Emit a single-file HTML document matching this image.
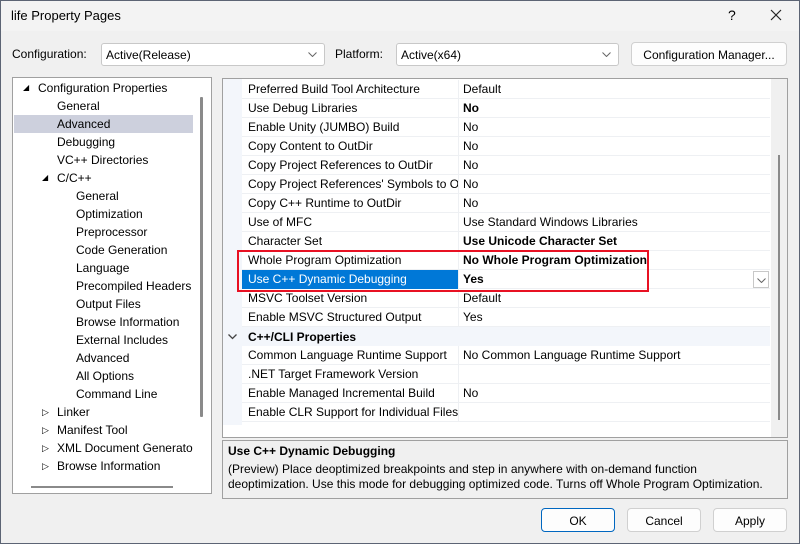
<!DOCTYPE html>
<html><head><meta charset="utf-8"><style>
*{box-sizing:border-box;margin:0;padding:0}
body{width:800px;height:544px;overflow:hidden;background:#f0f0f0;font-family:"Liberation Sans",sans-serif;font-size:12px;color:#000;position:relative}
.abs{position:absolute}
.win{position:absolute;left:0;top:0;width:800px;height:544px;border:1px solid #5c6474;}
.combo{position:absolute;height:23px;background:#fff;border:1px solid #c8c8c8;border-radius:3px;padding:4px 0 0 4px}
.btn{position:absolute;height:24px;background:#fdfdfd;border:1px solid #d0d0d0;border-radius:4px;text-align:center;padding-top:5px}
.tree div{position:absolute;height:18px;line-height:18px;white-space:nowrap}
.row{position:absolute;left:242px;width:528px;height:19px;border-bottom:1px solid #eef0f3;line-height:19px;white-space:nowrap}
.row .n{position:absolute;left:6px;width:210px;overflow:hidden}
.row .v{position:absolute;left:216px;padding-left:4px;border-left:1px solid #eef0f3;height:19px;width:312px}
b{font-weight:bold}
</style></head><body>
<div class="win"></div>
<div class="abs" style="left:1px;top:1px;width:798px;height:30px;background:#f3f3f3"></div>
<div class="abs" style="left:11px;top:8px;font-size:13px">life Property Pages</div>
<div class="abs" style="left:728px;top:7px;font-size:14px">?</div>
<svg class="abs" style="left:770px;top:9px" width="12" height="12"><path d="M1 1L11 11M11 1L1 11" stroke="#222" stroke-width="1.2"/></svg>

<div class="abs" style="left:12px;top:47px">Configuration:</div>
<div class="combo" style="left:101px;top:43px;width:224px">Active(Release)<svg class="abs" style="right:7px;top:8px" width="9" height="5"><path d="M0.5 0.5L4.5 4.5L8.5 0.5" fill="none" stroke="#666"/></svg></div>
<div class="abs" style="left:335px;top:47px">Platform:</div>
<div class="combo" style="left:396px;top:43px;width:223px">Active(x64)<svg class="abs" style="right:7px;top:8px" width="9" height="5"><path d="M0.5 0.5L4.5 4.5L8.5 0.5" fill="none" stroke="#666"/></svg></div>
<div class="btn" style="left:631px;top:42px;width:156px">Configuration Manager...</div>

<!-- tree -->
<div class="abs" style="left:12px;top:77px;width:200px;height:417px;border:1px solid #a0a0a0;background:#fff"></div>
<div class="abs" style="left:14px;top:115px;width:179px;height:18px;background:#cdd0dd"></div>
<div class="abs" style="left:200px;top:97px;width:3px;height:320px;background:#8a8a8a;border-radius:1px"></div>
<div class="abs" style="left:31px;top:486px;width:142px;height:2px;background:#8a8a8a"></div>
<div class="tree">
<div style="left:23px;top:79px;font-size:8px">◢</div>
<div style="left:38px;top:79px">Configuration Properties</div>
<div style="left:57px;top:97px">General</div>
<div style="left:57px;top:115px">Advanced</div>
<div style="left:57px;top:133px">Debugging</div>
<div style="left:57px;top:151px">VC++ Directories</div>
<div style="left:42px;top:169px;font-size:8px">◢</div>
<div style="left:57px;top:169px">C/C++</div>
<div style="left:76px;top:187px">General</div>
<div style="left:76px;top:205px">Optimization</div>
<div style="left:76px;top:223px">Preprocessor</div>
<div style="left:76px;top:241px">Code Generation</div>
<div style="left:76px;top:259px">Language</div>
<div style="left:76px;top:277px">Precompiled Headers</div>
<div style="left:76px;top:295px">Output Files</div>
<div style="left:76px;top:313px">Browse Information</div>
<div style="left:76px;top:331px">External Includes</div>
<div style="left:76px;top:349px">Advanced</div>
<div style="left:76px;top:367px">All Options</div>
<div style="left:76px;top:385px">Command Line</div>
<div style="left:42px;top:403px;font-size:9px">▷</div><div style="left:57px;top:403px">Linker</div>
<div style="left:42px;top:421px;font-size:9px">▷</div><div style="left:57px;top:421px">Manifest Tool</div>
<div style="left:42px;top:439px;font-size:9px">▷</div><div style="left:57px;top:439px;width:136px;overflow:hidden">XML Document Generator</div>
<div style="left:42px;top:457px;font-size:9px">▷</div><div style="left:57px;top:457px">Browse Information</div>
</div>

<!-- grid -->
<div class="abs" style="left:222px;top:78px;width:566px;height:360px;border:1px solid #a0a0a0;background:#fff"></div>
<div class="abs" style="left:223px;top:79px;width:19px;height:346px;background:#f3f6fb"></div>
<div class="abs" style="left:771px;top:79px;width:16px;height:358px;background:#f0f0f0"></div>
<div class="abs" style="left:778px;top:155px;width:2px;height:265px;background:#8a8a8a"></div>

<div class="row" style="top:80px"><span class="n">Preferred Build Tool Architecture</span><span class="v">Default</span></div>
<div class="row" style="top:99px"><span class="n">Use Debug Libraries</span><span class="v"><b>No</b></span></div>
<div class="row" style="top:118px"><span class="n">Enable Unity (JUMBO) Build</span><span class="v">No</span></div>
<div class="row" style="top:137px"><span class="n">Copy Content to OutDir</span><span class="v">No</span></div>
<div class="row" style="top:156px"><span class="n">Copy Project References to OutDir</span><span class="v">No</span></div>
<div class="row" style="top:175px"><span class="n">Copy Project References' Symbols to OutDir</span><span class="v">No</span></div>
<div class="row" style="top:194px"><span class="n">Copy C++ Runtime to OutDir</span><span class="v">No</span></div>
<div class="row" style="top:213px"><span class="n">Use of MFC</span><span class="v">Use Standard Windows Libraries</span></div>
<div class="row" style="top:232px"><span class="n">Character Set</span><span class="v"><b>Use Unicode Character Set</b></span></div>
<div class="row" style="top:251px"><span class="n">Whole Program Optimization</span><span class="v"><b>No Whole Program Optimization</b></span></div>
<div class="row" style="top:270px"><span class="n" style="background:#0078d7;color:#fff;left:0;padding-left:6px;width:216px">Use C++ Dynamic Debugging</span><span class="v"><b>Yes</b></span>
<span class="abs" style="left:511px;top:1px;width:16px;height:17px;border:1px solid #c8c8c8;background:#fff"><svg class="abs" style="left:3px;top:6px" width="9" height="5"><path d="M0.5 0.5L4.5 4.5L8.5 0.5" fill="none" stroke="#666"/></svg></span></div>
<div class="row" style="top:289px"><span class="n">MSVC Toolset Version</span><span class="v">Default</span></div>
<div class="row" style="top:308px"><span class="n">Enable MSVC Structured Output</span><span class="v">Yes</span></div>
<div class="abs" style="left:223px;top:327px;width:547px;height:19px;background:#f3f6fb"></div>
<svg class="abs" style="left:228px;top:334px" width="9" height="6"><path d="M0.5 0.5L4.5 4.5L8.5 0.5" fill="none" stroke="#444" stroke-width="1.3"/></svg>
<div class="abs" style="left:248px;top:330px"><b>C++/CLI Properties</b></div>
<div class="row" style="top:346px"><span class="n">Common Language Runtime Support</span><span class="v">No Common Language Runtime Support</span></div>
<div class="row" style="top:365px"><span class="n">.NET Target Framework Version</span><span class="v"></span></div>
<div class="row" style="top:384px"><span class="n">Enable Managed Incremental Build</span><span class="v">No</span></div>
<div class="row" style="top:403px"><span class="n">Enable CLR Support for Individual Files</span><span class="v"></span></div>

<div class="abs" style="left:237px;top:250px;width:412px;height:42px;border:2px solid #e81123"></div>

<!-- description -->
<div class="abs" style="left:222px;top:440px;width:566px;height:59px;border:1px solid #a0a0a0"></div>
<div class="abs" style="left:228px;top:444px"><b>Use C++ Dynamic Debugging</b></div>
<div class="abs" style="left:228px;top:462px;line-height:15px;white-space:nowrap">(Preview) Place deoptimized breakpoints and step in anywhere with on-demand function<br>deoptimization. Use this mode for debugging optimized code. Turns off Whole Program Optimization.</div>

<div class="btn" style="left:541px;top:508px;width:74px;border:1px solid #0067c0">OK</div>
<div class="btn" style="left:627px;top:508px;width:74px">Cancel</div>
<div class="btn" style="left:713px;top:508px;width:74px">Apply</div>
</body></html>
